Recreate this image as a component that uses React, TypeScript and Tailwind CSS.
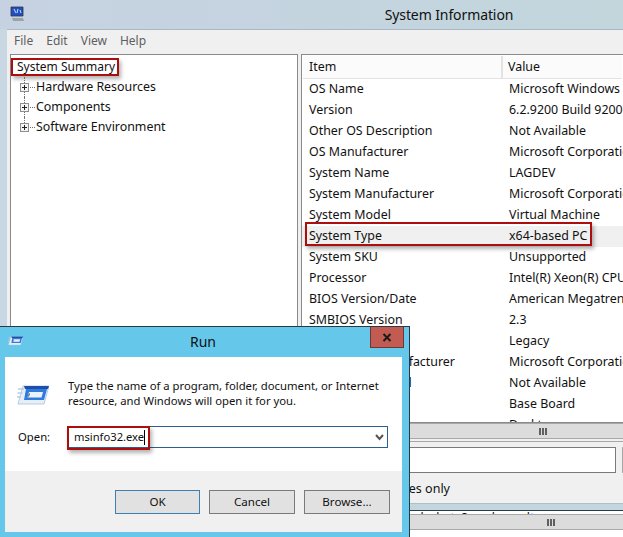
const rows = [
  ["OS Name", "Microsoft Windows Server 2012 Datacenter"],
  ["Version", "6.2.9200 Build 9200"],
  ["Other OS Description", "Not Available"],
  ["OS Manufacturer", "Microsoft Corporation"],
  ["System Name", "LAGDEV"],
  ["System Manufacturer", "Microsoft Corporation"],
  ["System Model", "Virtual Machine"],
  ["System Type", "x64-based PC"],
  ["System SKU", "Unsupported"],
  ["Processor", "Intel(R) Xeon(R) CPU E5-2660 0 @ 2.20GHz"],
  ["BIOS Version/Date", "American Megatrends Inc. 090006"],
  ["SMBIOS Version", "2.3"],
  ["BIOS Mode", "Legacy"],
  ["BaseBoard Manufacturer", "Microsoft Corporation"],
  ["BaseBoard Model", "Not Available"],
  ["BaseBoard Name", "Base Board"],
  ["Platform Role", "Desktop"],
]

function Expander({ label, last }: { label: string; last?: boolean }) {
  return (
    <div className="flex items-center h-5 text-[12.4px]">
      <div className="relative w-[17px] h-5 ml-[3px] shrink-0">
        <div className={`absolute left-[4px] top-0 border-l border-dotted border-gray-500 ${last ? "h-2.5" : "h-5"}`}></div>
        <div className="absolute left-0 top-[6px] w-[9px] h-[9px] bg-[#f4f4f4] border border-[#8e8e8e] flex items-center justify-center">
          <svg width="7" height="7" viewBox="0 0 7 7">
            <path d="M1 3.5h5M3.5 1v5" stroke="#222" strokeWidth="1" />
          </svg>
        </div>
        <div className="absolute left-[10px] top-[10px] w-[5px] border-t border-dotted border-gray-500"></div>
      </div>
      <span className="-ml-[1px]">{label}</span>
    </div>
  )
}

function ScrollBar({ shift }: { shift: string }) {
  return (
    <div className={`h-4 shrink-0 bg-[#dcdcdc] border-y border-[#a8a8a8] flex items-center justify-center ${shift}`}>
      <div className="flex gap-[1px]">
        <div className="w-[2px] h-[7px] bg-[#606060]"></div>
        <div className="w-[2px] h-[7px] bg-[#606060]"></div>
        <div className="w-[2px] h-[7px] bg-[#606060]"></div>
      </div>
    </div>
  )
}

function RunIcon({ width }: { width: number }) {
  return (
    <svg width={width} height={(width * 20) / 32} viewBox="0 0 32 20">
      <path d="M6 1h26l-5 18H1z" fill="#e6eef8" stroke="#a9c0da" strokeWidth="0.8" />
      <path d="M7 1h25l-1 3H8z" fill="#1f4fa8" />
      <path d="M1 4h6M0.5 8h5M0 12h4" stroke="#b5cbe3" strokeWidth="1.6" />
      <path d="M9 4h21l-3 11H7z" fill="#2f7be0" />
      <path d="M12 7h14l-1.5 5.5H10.5z" fill="#eaf3fc" />
      <path d="M12.5 8.5l-1 3" stroke="#444" strokeWidth="1" />
    </svg>
  )
}

function DialogButton({ label, active }: { label: string; active?: boolean }) {
  return (
    <div className={`h-[24px] bg-[#e1e1e1] border flex items-center justify-center ${active ? "w-[85px] border-[#3c7fb1]" : "w-[86px] border-[#7a7a7a]"}`}>
      {label}
    </div>
  )
}

function RunDialog() {
  return (
    <div className="absolute left-0 top-[326px] w-[410px] h-[211px] bg-[#65c8eb] border-t border-r border-[#2a3a44] flex flex-col px-[5px] text-[11.3px] text-[#111]">
      <div className="relative h-[30px] shrink-0 flex items-center">
        <div className="ml-[3px] -mt-[2px]">
          <RunIcon width={15} />
        </div>
        <span className="absolute left-[185px] top-[4px] text-[14px]">Run</span>
        <div className="absolute right-0 top-0 w-[34px] h-[21px] bg-[#c25c53] border border-[#6b3a36] border-t-0 flex items-center justify-center">
          <svg width="10" height="9" viewBox="0 0 10 9">
            <path d="M1.5 1l7 7M8.5 1l-7 7" stroke="#1a1a1a" strokeWidth="2" />
          </svg>
        </div>
      </div>
      <div className="bg-white flex-1 mb-[5px] flex flex-col mr-[2px]">
        <div className="flex-1 flex flex-col">
          <div className="flex pt-[21px] pl-[12px]">
            <div className="mt-[7px]">
              <RunIcon width={32} />
            </div>
            <p className="ml-[19px] leading-[15px] whitespace-nowrap">
              Type the name of a program, folder, document, or Internet<br />
              resource, and Windows will open it for you.
            </p>
          </div>
          <div className="flex items-center mt-[18px] pl-[13px]">
            <span className="w-[50px]">Open:</span>
            <div className="relative flex-1 mr-[14px] h-[22px] border border-[#2a5f8f] flex items-center pl-[5px] text-[11.2px]">
              <span>msinfo32.exe</span>
              <div className="w-px h-[15px] bg-black"></div>
              <svg className="absolute right-[2px] top-[6px]" width="11" height="9" viewBox="0 0 11 9">
                <path d="M2 2l3.5 4L9 2" fill="none" stroke="#555" strokeWidth="2" />
              </svg>
              <div className="absolute -left-[2px] -top-[1px] w-[83px] h-[24px] border-2 border-[#ac0d0d] shadow-[2px_3px_4px_rgba(0,0,0,0.3)]"></div>
            </div>
          </div>
        </div>
        <div className="h-[61px] bg-[#f0f0f0] flex justify-end items-start gap-[9px] pt-[19px] pr-[12px] shrink-0 text-[11.6px]">
          <DialogButton label="OK" active />
          <DialogButton label="Cancel" />
          <DialogButton label="Browse..." />
        </div>
      </div>
    </div>
  )
}

export default function App() {
  return (
    <div className="relative w-[623px] h-[537px] overflow-hidden flex flex-col bg-[#c9d7e2] text-[12px] text-[#111] font-['Noto_Sans',sans-serif]">
      <div className="relative h-[29px] shrink-0 bg-gradient-to-r from-[#c6d2e2] to-[#c2d6dc] flex items-center justify-center">
        <svg className="absolute left-[10px] top-[6px]" width="14" height="16" viewBox="0 0 14 16">
          <path d="M1 1h12v9H1z" fill="#1f4fc0" stroke="#334" strokeWidth="0.8" />
          <path d="M4 3l2 4M8 3l-1 4M10 4l1 3" stroke="#cfe0ff" strokeWidth="1" />
          <path d="M2 12h11l1 3H3z" fill="#9aa3ac" />
        </svg>
        <span className="text-[14px] ml-[275px] tracking-[-0.1px]">System Information</span>
      </div>

      <div className="flex-1 min-h-0 ml-[7px] bg-[#f0f0f0] border-t border-[#a9b8c2] flex flex-col">
        <div className="h-[24px] shrink-0 flex items-center gap-[13px] pl-[7px] pb-[2px] text-[#5f5f5f]">
          <span>File</span>
          <span>Edit</span>
          <span>View</span>
          <span>Help</span>
        </div>

        <div className="flex flex-1 min-h-0 gap-[3px] pl-[3px]">
          <div className="w-[288px] shrink-0 bg-white border border-[#8a8a8a] pt-[2px] pl-[6px]">
            <div className="relative h-5 flex items-center w-fit">
              <span>System Summary</span>
              <div className="absolute -left-[6px] -right-[4px] top-[1px] bottom-[1px] border-2 border-[#ac0d0d] shadow-[2px_3px_4px_rgba(0,0,0,0.3)]"></div>
            </div>
            <Expander label="Hardware Resources" />
            <Expander label="Components" />
            <Expander label="Software Environment" last />
          </div>

          <div className="flex-1 min-w-0 flex flex-col">
            <div className="h-[369px] shrink-0 bg-white border border-[#8a8a8a] border-r-0 flex flex-col overflow-hidden text-[12.4px]">
              <div className="h-[23px] shrink-0 flex border-b border-[#e3e3e3] m-[1px] mb-0 bg-[#fbfbfb]">
                <div className="w-[200px] pl-[6px] border-r-2 border-[#e3e3e3] flex items-center">Item</div>
                <div className="pl-[5px] flex items-center">Value</div>
              </div>
              <div className="flex-1 min-h-0 overflow-hidden">
                {rows.map(([item, value]) => {
                  const picked = item === "System Type"
                  return (
                    <div key={item} className={`relative h-[21px] flex items-center whitespace-nowrap ${picked ? "bg-[#f0f0f0]" : ""}`}>
                      <div className="w-[202px] shrink-0 pl-[7px]">{item}</div>
                      <div className="pl-[5px]">{value}</div>
                      {picked && (
                        <div className="absolute left-[3px] w-[287px] top-[-4px] bottom-[1px] border-2 border-[#ac0d0d] shadow-[2px_3px_4px_rgba(0,0,0,0.3)]"></div>
                      )}
                    </div>
                  )
                })}
              </div>
            </div>
            <ScrollBar shift="pl-[162px]" />

            <div className="h-[62px] shrink-0 border-t border-[#a8a8a8] mt-[2px] overflow-hidden">
              <div className="flex items-center justify-end mt-[5px]">
                <div className="w-[300px] h-[26px] bg-white border border-[#7a7a7a]"></div>
                <div className="w-[1px] h-[26px] ml-[6px] bg-[#a8a8a8]"></div>
              </div>
              <div className="flex justify-end pr-[173px] mt-[7px] whitespace-nowrap text-[12.5px]">Search selected categories only</div>
            </div>

            <div className="h-[8px] shrink-0 bg-[#c3d6de] border-b border-[#2a3a44] border-t border-t-[#b0bfc6]"></div>
            <div className="h-[3px] shrink-0 bg-white overflow-hidden flex justify-end pr-[83px]">
              <span className="leading-[15px] text-[12px] whitespace-nowrap -mt-[1px] pt-0">Find what: Search results</span>
            </div>
            <ScrollBar shift="pl-[178px]" />
            <div className="flex-1 bg-white"></div>
          </div>
        </div>
      </div>

      <RunDialog />
    </div>
  )
}
